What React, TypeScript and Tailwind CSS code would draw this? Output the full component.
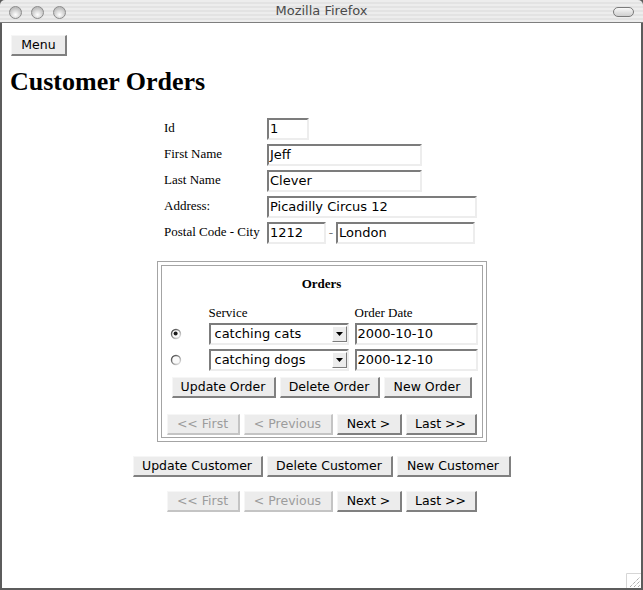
import type { ReactNode } from 'react';

const sans = "font-['DejaVu_Sans',sans-serif]";

type BtnProps = { label: string; w: string; disabled?: boolean };

function Btn({ label, w, disabled }: BtnProps) {
  return (
    <button
      type="button"
      className={`${w} ${sans} h-[21px] shrink-0 border-t border-l border-t-[#f6f6f6] border-l-[#f6f6f6] border-r-2 border-b-2 bg-[#ececec] text-[12.5px] leading-[18px] ${
        disabled ? 'border-r-[#c4c4c4] border-b-[#c4c4c4] text-[#9c9c9c]' : 'border-r-[#808080] border-b-[#808080] text-black'
      }`}
    >
      {label}
    </button>
  );
}

function Field({ value, w }: { value: string; w: string }) {
  return (
    <div
      className={`${w} ${sans} h-[22px] shrink-0 border-t-2 border-l-2 border-r-2 border-b-2 border-t-[#7c7c7c] border-l-[#7c7c7c] border-r-[#ededed] border-b-[#ededed] bg-white pl-[1px] text-[13px] leading-[18px] text-black`}
    >
      {value}
    </div>
  );
}

function Row({ label, children }: { label: string; children: ReactNode }) {
  return (
    <div className="flex h-[22px]">
      <div className="w-[103px] shrink-0 pt-[2px] text-[13px] leading-[15px]">{label}</div>
      {children}
    </div>
  );
}

function Radio({ checked }: { checked?: boolean }) {
  return (
    <svg width="12" height="12" viewBox="0 0 12 12" className="ml-[8px]">
      <defs>
        <linearGradient id="rg" x1="0" y1="0" x2="1" y2="1">
          <stop offset="0" stopColor="#3a3a3a" />
          <stop offset="0.55" stopColor="#9a9a9a" />
          <stop offset="1" stopColor="#f2f2f2" />
        </linearGradient>
      </defs>
      <circle cx="6" cy="6" r="4.5" fill="#fafafa" stroke="url(#rg)" strokeWidth="1.4" />
      {checked ? <circle cx="5.6" cy="5.6" r="2" fill="#1a1a1a" /> : null}
    </svg>
  );
}

function Select({ value }: { value: string }) {
  return (
    <div
      className={`${sans} relative h-[22px] w-[140px] border-t-2 border-l-2 border-r-2 border-b-2 border-t-[#7c7c7c] border-l-[#7c7c7c] border-r-[#ededed] border-b-[#ededed] bg-white pl-[4px] text-[13px] leading-[18px]`}
    >
      {value}
      <span className="absolute right-0 top-[1px] flex h-[16px] w-[15px] items-center justify-center border-t border-l border-t-white border-l-white border-r border-b border-r-[#7c7c7c] border-b-[#7c7c7c] bg-[#ececec]">
        <svg width="7" height="4" viewBox="0 0 7 4">
          <path d="M0 0h7L3.5 4z" fill="#000" />
        </svg>
      </span>
    </div>
  );
}

function Nav() {
  return (
    <div className="flex justify-center gap-[4px]">
      <Btn label="<< First" w="w-[73px]" disabled />
      <Btn label="< Previous" w="w-[89px]" disabled />
      <Btn label="Next >" w="w-[65px]" />
      <Btn label="Last >>" w="w-[71px]" />
    </div>
  );
}

export default function App() {
  return (
    <div className="flex h-[590px] w-[643px] flex-col overflow-hidden bg-[#5c5c5c] font-['Liberation_Serif',serif] text-black">
      {/* title bar */}
      <div className="relative flex h-[23px] shrink-0 items-center justify-center rounded-t-[5px] border-b border-b-[#7e7e7e] bg-[repeating-linear-gradient(to_bottom,#ededed_0px,#ededed_2px,#e3e3e3_2px,#e3e3e3_4px)]">
        <div className="absolute left-[9px] top-[6px] flex gap-[9px]">
          <span className="h-[13px] w-[13px] rounded-full border border-[#8c8c8c] bg-[radial-gradient(circle_at_50%_70%,#ffffff,#c9c9c9_60%,#a9a9a9)]" />
          <span className="h-[13px] w-[13px] rounded-full border border-[#8c8c8c] bg-[radial-gradient(circle_at_50%_70%,#ffffff,#c9c9c9_60%,#a9a9a9)]" />
          <span className="h-[13px] w-[13px] rounded-full border border-[#8c8c8c] bg-[radial-gradient(circle_at_50%_70%,#ffffff,#c9c9c9_60%,#a9a9a9)]" />
        </div>
        <span className={`${sans} text-[13px] text-[#4a4a4a]`}>Mozilla Firefox</span>
        <span className="absolute right-[9px] top-[7px] h-[10px] w-[21px] rounded-full border border-[#7a7a7a] bg-linear-to-b from-[#f8f8f8] to-[#cfcfcf]" />
      </div>

      {/* page */}
      <div className="relative mx-[2px] mb-[2px] flex flex-1 flex-col bg-white">
        <div className="ml-[9px] mt-[9px]">
          <Btn label="Menu" w="w-[56px]" />
        </div>
        <h1 className="ml-[8px] mt-[11px] text-[26px] font-bold leading-[30px]">Customer Orders</h1>

        <div className="mx-auto mt-[21px] flex w-[313px] -translate-x-[1px] flex-col gap-[4px]">
          <Row label="Id">
            <Field value="1" w="w-[42px]" />
          </Row>
          <Row label="First Name">
            <Field value="Jeff" w="w-[155px]" />
          </Row>
          <Row label="Last Name">
            <Field value="Clever" w="w-[155px]" />
          </Row>
          <Row label="Address:">
            <Field value="Picadilly Circus 12" w="w-[210px]" />
          </Row>
          <Row label="Postal Code - City">
            <Field value="1212" w="w-[59px]" />
            <span className="w-[10px] pt-[3px] text-center text-[13px] leading-[15px] text-[#777]">-</span>
            <Field value="London" w="w-[139px]" />
          </Row>
        </div>

        <div className="mx-auto mt-[17px] w-[330px] border border-[#a4a4a4] p-[3px]">
          <div className="flex flex-col border border-[#a4a4a4] pb-[2px]">
            <div className="mt-[10px] text-center text-[13px] font-bold leading-[15px]">Orders</div>
            <div className="mt-[14px] grid grid-cols-[41px_140px_123px] gap-x-[6px] text-[13px] leading-[15px]">
              <div />
              <div>Service</div>
              <div>Order Date</div>
            </div>
            <div className="mt-[3px] grid grid-cols-[41px_140px_123px] items-center gap-x-[6px] gap-y-[4px]">
              <Radio checked />
              <Select value="catching cats" />
              <Field value="2000-10-10" w="w-[123px]" />
              <Radio />
              <Select value="catching dogs" />
              <Field value="2000-12-10" w="w-[123px]" />
            </div>
            <div className="mt-[6px] flex justify-center gap-[4px]">
              <Btn label="Update Order" w="w-[104px]" />
              <Btn label="Delete Order" w="w-[100px]" />
              <Btn label="New Order" w="w-[88px]" />
            </div>
            <div className="mt-[16px]">
              <Nav />
            </div>
          </div>
        </div>

        <div className="mt-[14px] flex justify-center gap-[4px]">
          <Btn label="Update Customer" w="w-[130px]" />
          <Btn label="Delete Customer" w="w-[126px]" />
          <Btn label="New Customer" w="w-[114px]" />
        </div>
        <div className="mt-[14px]">
          <Nav />
        </div>

        {/* resize grip */}
        <svg width="15" height="15" viewBox="0 0 15 15" className="absolute bottom-0 right-0">
          <path d="M0.5 15V0.5H15" fill="#fff" stroke="#d6d6d6" />
          <path d="M4 14L14 4M8 14L14 8M12 14L14 12" stroke="#8a8a8a" strokeDasharray="1 1" />
        </svg>
      </div>
    </div>
  );
}
